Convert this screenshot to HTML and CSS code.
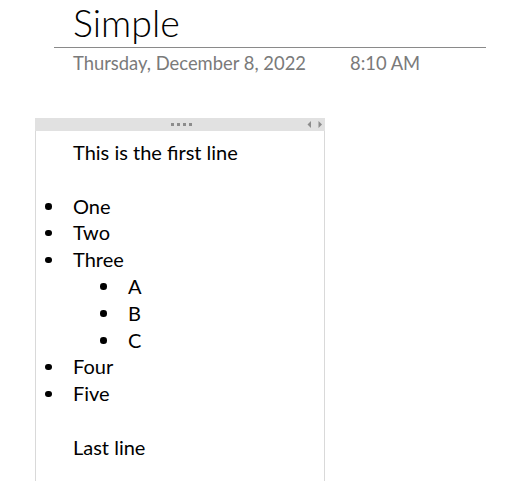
FILE: index.html
```html
<!DOCTYPE html>
<html>
<head>
<meta charset="utf-8">
<link rel="stylesheet" href="styles.css">
</head>
<body>
<div class="page-header">
  <h1 class="title">Simple</h1>
  <div class="meta"><span class="date">Thursday, December 8, 2022</span><span class="time">8:10 AM</span></div>
</div>
<div class="outline">
  <div class="handle">
    <div class="dots"><i></i><i></i><i></i><i></i></div>
    <div class="arrows">
      <svg width="16" height="7" viewBox="0 0 16 7"><path d="M4 0 L0.5 3.5 L4 7 Z" fill="#8c8c8c"/><path d="M11.5 0 L15 3.5 L11.5 7 Z" fill="#8c8c8c"/></svg>
    </div>
  </div>
  <div class="content">
    <p>This is the first line</p>
    <p>&nbsp;</p>
    <ul class="list">
      <li>One</li>
      <li>Two</li>
      <li>Three
        <ul class="list sub">
          <li>A</li>
          <li>B</li>
          <li>C</li>
        </ul>
      </li>
      <li>Four</li>
      <li>Five</li>
    </ul>
    <p>&nbsp;</p>
    <p>Last line</p>
  </div>
</div>
</body>
</html>
```
FILE: styles.css
```css
html, body { margin: 0; padding: 0; overflow: hidden; }
body {
  background: #fff;
  font-family: Lato, "Noto Sans", sans-serif;
  color: #000;
  height: 481px;
}
.page-header {
  margin-left: 54px;
  width: 432px;
}
.title {
  margin: 0;
  padding-left: 19px;
  font-family: Lato, sans-serif;
  font-weight: 300;
  font-size: 37.5px;
  line-height: 46px;
  height: 48px;
  border-bottom: 1px solid #8a8a8a;
  box-sizing: border-box;
}
.meta {
  padding-left: 19px;
  color: #7a7a7a;
  font-size: 18.4px;
  line-height: 30px;
  display: flex;
  gap: 44px;
}
.outline {
  margin-left: 35px;
  margin-top: 40px;
  width: 290px;
  height: 363px;
  box-sizing: border-box;
  border-left: 1px solid #d9d9d9;
  border-right: 1px solid #d9d9d9;
}
.handle {
  height: 13px;
  background: #e1e1e1;
  margin: 0 -1px;
  position: relative;
  display: flex;
  align-items: center;
  justify-content: center;
}
.dots { display: flex; gap: 3px; margin-left: 3px; }
.dots i { width: 3px; height: 3px; background: #8c8c8c; display: block; }
.arrows {
  position: absolute;
  right: 2px;
  top: 3px;
  line-height: 0;
}
.content {
  padding-top: 8px;
  padding-left: 37px;
  font-size: 20px;
  line-height: 26.8px;
}
.content p { margin: 0; }
.list {
  margin: 0;
  padding: 0;
  list-style: none;
}
.list li::before {
  content: "";
  display: inline-block;
  width: 6.5px;
  height: 6.5px;
  border-radius: 50%;
  background: #000;
  margin-left: -28px;
  margin-right: 21.5px;
  margin-bottom: 4px;
}
.list.sub { padding-left: 55px; }
```
